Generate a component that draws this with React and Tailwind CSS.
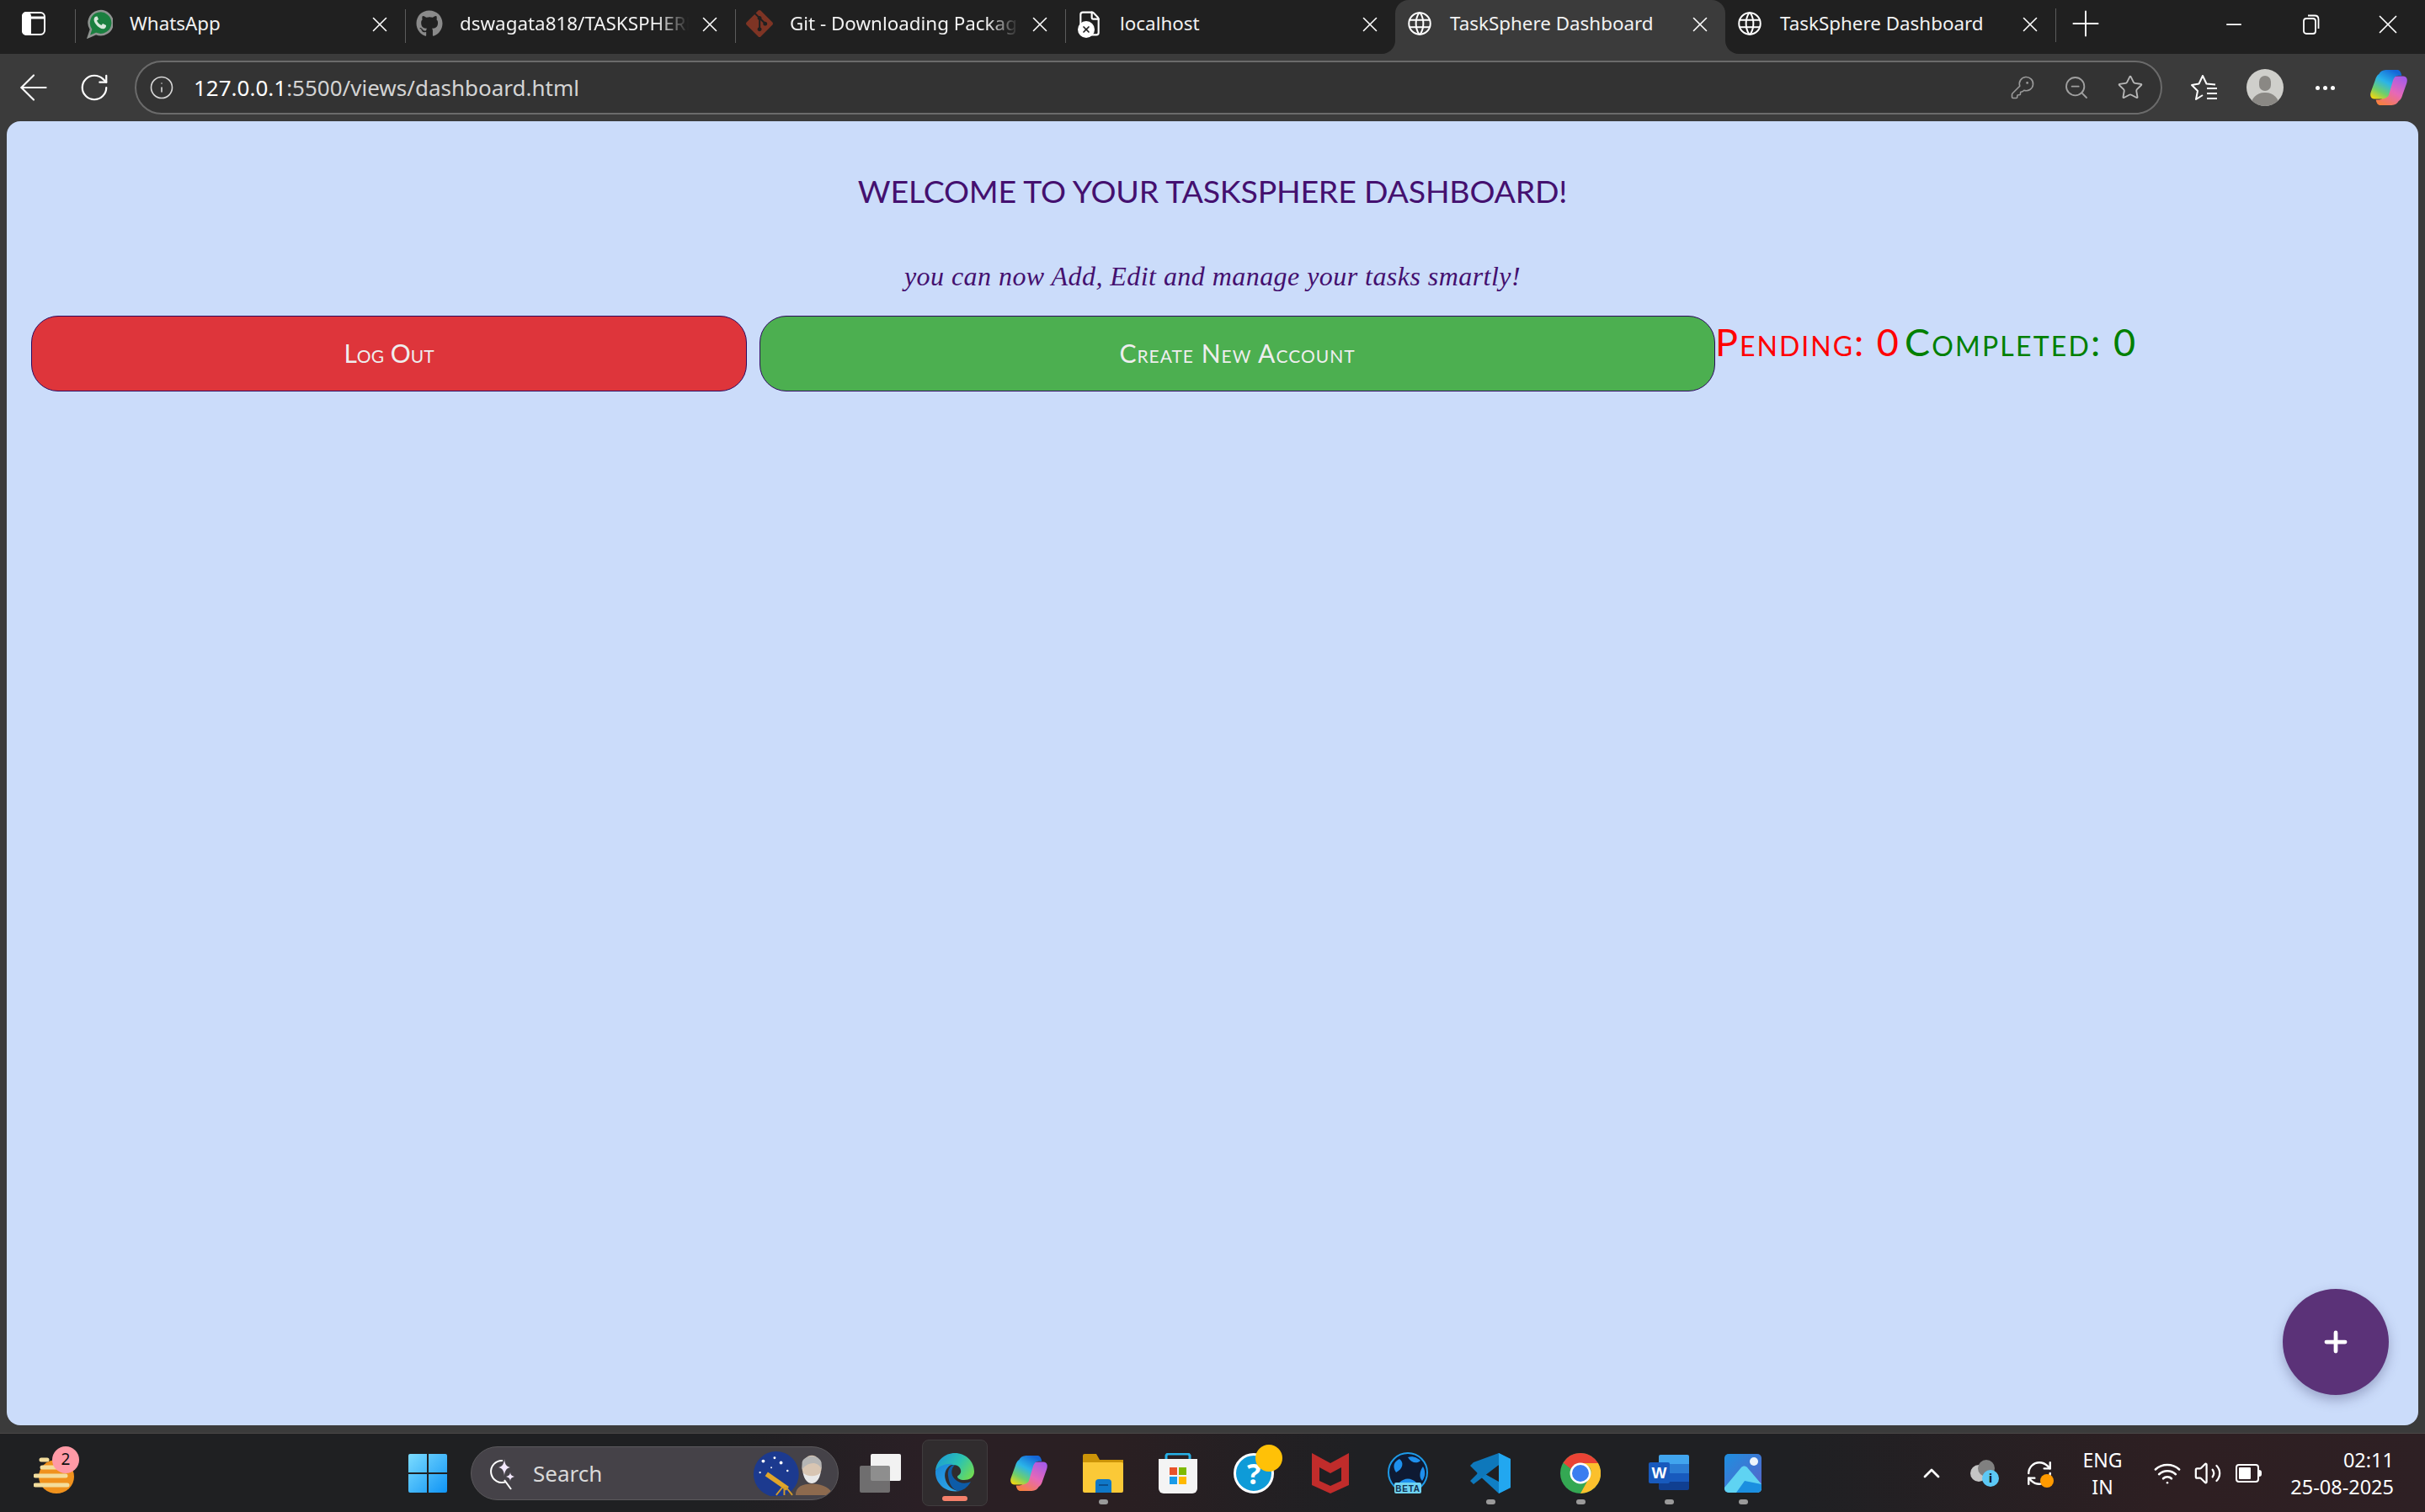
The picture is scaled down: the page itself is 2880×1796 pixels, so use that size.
import React from "react";
import { ArrowLeft, RotateCw, RefreshCw, Info, KeyRound, ZoomOut, Star, X, Plus, Minus, ChevronUp, Volume2, Wifi, File } from "lucide-react";
import { FaGithub } from "react-icons/fa";
import { SiGit } from "react-icons/si";
import { TbWorld } from "react-icons/tb";

function WhatsAppIcon() {
  return (
    <svg width="32" height="36" viewBox="0 0 32 36">
      <path d="M3 34 L6 25 A14 14 0 1 1 12 30 Z" fill="#1a7f3f" stroke="#8f9491" strokeWidth="2.5" />
      <path d="M11 10 C9 12 9 15 12 19 C15 23 19 25 22 24 C24 23 24 21 24 20 L20 18 L18.5 20 C16 19 14 17 13 14.5 L15 13 L13.5 9.5 C12.5 9.3 11.7 9.5 11 10 Z" fill="#d8e8dc" />
    </svg>
  );
}

function LocalhostIcon() {
  return (
    <span className="relative flex h-[34px] w-[28px] items-center justify-center">
      <File size={32} strokeWidth={1.6} color="#ffffff" className="shrink-0" />
      <span className="absolute bottom-0 left-0 flex h-[20px] w-[20px] items-center justify-center rounded-full bg-white">
        <X size={12} strokeWidth={3.4} color="#202020" />
      </span>
    </span>
  );
}

function Tab({ icon, title, active, fade, divider = true }) {
  return (
    <div className={`relative flex h-[64px] w-[392px] shrink-0 items-center ${active ? "rounded-t-2xl bg-[#3b3b3b]" : ""}`}>
      {divider && !active && <span className="absolute left-0 top-[11px] h-[40px] w-px bg-[#5c5c5c]" />}
      {active && (
        <>
          <span className="absolute -left-4 bottom-0 h-4 w-4 bg-[#3b3b3b]"><span className="block h-4 w-4 rounded-br-2xl bg-[#202020]" /></span>
          <span className="absolute -right-4 bottom-0 h-4 w-4 bg-[#3b3b3b]"><span className="block h-4 w-4 rounded-bl-2xl bg-[#202020]" /></span>
        </>
      )}
      <span className="flex w-[58px] shrink-0 -translate-y-[4px] items-center justify-center">{icon}</span>
      <span className={`ml-[7px] w-[272px] whitespace-nowrap -translate-y-[4px] text-[22.4px] leading-[34px] text-[#f2f2f2] ${fade ? "overflow-hidden [mask-image:linear-gradient(to_right,black_86%,transparent_100%)]" : ""}`}>{title}</span>
      <span className="ml-[10px] flex w-[30px] -translate-y-[3px] items-center justify-center">
        <X size={30} strokeWidth={1.3} color="#ffffff" className="shrink-0" />
      </span>
    </div>
  );
}

function TabStrip() {
  return (
    <div className="flex h-[64px] items-center bg-[#202020]">
      <span className="flex w-[89px] shrink-0 -translate-y-[4px] items-center justify-center pr-[9px]">
        <svg width="28" height="28" viewBox="0 0 28 28" fill="none" stroke="#ffffff" strokeWidth="2">
          <rect x="1" y="1" width="26" height="26" rx="5" />
          <path d="M1 7H27" strokeWidth="3" />
          <path d="M10 8V27" />
          <rect x="1" y="1" width="9" height="26" rx="4" fill="#ffffff" />
        </svg>
      </span>
      <Tab icon={<WhatsAppIcon />} title="WhatsApp" />
      <Tab icon={<FaGithub size={32} color="#8a8a8a" />} title="dswagata818/TASKSPHERE" fade />
      <Tab icon={<SiGit size={32} color="#7e3424" />} title="Git - Downloading Package" fade />
      <Tab icon={<LocalhostIcon />} title="localhost" />
      <Tab icon={<TbWorld size={34} strokeWidth={1.4} color="#ffffff" />} title="TaskSphere Dashboard" active />
      <Tab icon={<TbWorld size={34} strokeWidth={1.4} color="#ffffff" />} title="TaskSphere Dashboard" divider={false} />
      <span className="h-[40px] w-px -translate-y-[2px] bg-[#5c5c5c]" />
      <span className="ml-[10px] flex w-[50px] -translate-y-[4px] items-center justify-center">
        <Plus size={50} strokeWidth={0.9} color="#ffffff" className="shrink-0" />
      </span>
      <span className="ml-[121px] flex w-[60px] -translate-y-[3px] items-center justify-center"><Minus size={28} strokeWidth={1.5} color="#ffffff" /></span>
      <span className="ml-[32px] flex w-[60px] -translate-y-[3px] items-center justify-center">
        <svg width="20" height="24" viewBox="0 0 20 24" fill="none" stroke="#ffffff" strokeWidth="1.8">
          <rect x="1" y="5" width="14" height="18" rx="3" />
          <path d="M6 1.500H14C17 1.500 18.500 3.500 18.500 6V17" />
        </svg>
      </span>
      <span className="ml-[31px] flex w-[60px] -translate-y-[3px] items-center justify-center"><X size={38} strokeWidth={1.1} color="#ffffff" /></span>
    </div>
  );
}

function FavoritesIcon() {
  return (
    <svg width="34" height="34" viewBox="0 0 34 34" fill="none" stroke="#ffffff" strokeWidth="2" strokeLinejoin="round">
      <path d="M30 13.500L19.500 12.500L15 3L10.500 12.500L2 14L9 21L7 31L15 26" />
      <path d="M20 18H32M20 24H32M20 30H32" />
    </svg>
  );
}

const copilotDefs = (
  <defs>
    <linearGradient id="cpA" x1="0.7" y1="0" x2="0.1" y2="1">
      <stop offset="0" stopColor="#1466d8" />
      <stop offset="0.4" stopColor="#2bb4e8" />
      <stop offset="0.72" stopColor="#6fcf6a" />
      <stop offset="1" stopColor="#f8d70e" />
    </linearGradient>
    <linearGradient id="cpB" x1="0.8" y1="0" x2="0.2" y2="1">
      <stop offset="0" stopColor="#a65be8" />
      <stop offset="0.5" stopColor="#e668b8" />
      <stop offset="1" stopColor="#f7803f" />
    </linearGradient>
  </defs>
);

function CopilotIcon({ size = 46 }) {
  return (
    <svg width={size} height={size} viewBox="0 0 48 48">
      {copilotDefs}
      <path d="M36 41 C34 45 30 46 26 46 H14 C11 46 9 44 8 39 L12 39 C16 39 18 36 19 32 L24 15 C25 12 29 10 33 10 H42 C46 10 48 14 46 19 L41 33 C40 36 39 39 36 41Z" fill="url(#cpB)" />
      <path d="M12 7 C14 3 18 2 22 2 H34 C37 2 39 4 40 9 L36 9 C32 9 30 12 29 16 L24 33 C23 36 19 38 15 38 H6 C2 38 0 34 2 29 L7 15 C8 12 9 9 12 7Z" fill="url(#cpA)" />
    </svg>
  );
}

function Toolbar() {
  return (
    <div className="flex h-[80px] items-center bg-[#3b3b3b]">
      <span className="flex w-[80px] justify-center"><ArrowLeft size={50} strokeWidth={1} color="#ffffff" /></span>
      <span className="flex w-[64px] justify-center"><RotateCw size={38} strokeWidth={1.4} color="#ffffff" /></span>
      <div className="ml-[16px] flex h-[64px] w-[2408px] items-center rounded-full border-2 border-[#6b6b6b] bg-[#333333]">
        <span className="ml-[16px] flex w-[28px] justify-center"><Info size={30} strokeWidth={1.3} color="#d6d6d6" className="shrink-0" /></span>
        <span className="ml-[24px] text-[26px] leading-[34px] text-[#d4d4d4]"><span className="text-white">127.0.0.1</span>:5500/views/dashboard.html</span>
        <span className="ml-auto flex w-[64px] justify-center"><KeyRound size={30} strokeWidth={1.3} color="#9a9a9a" /></span>
        <span className="flex w-[64px] justify-center"><ZoomOut size={32} strokeWidth={1.4} color="#a0a0a0" /></span>
        <span className="mr-[4px] flex w-[64px] justify-center"><Star size={32} strokeWidth={1.4} color="#b8b8b8" /></span>
      </div>
      <span className="flex w-[100px] justify-center"><FavoritesIcon /></span>
      <span className="relative flex h-[44px] w-[44px] items-end justify-center overflow-hidden rounded-full bg-[#cfcfcb]">
        <span className="absolute top-[8px] h-[18px] w-[14px] rounded-full bg-[#8a8884]" />
        <span className="h-[16px] w-[34px] rounded-t-full bg-[#8a8884]" />
      </span>
      <span className="flex w-[98px] items-center justify-center gap-[4px]">
        <span className="h-[5px] w-[5px] rounded-full bg-white" />
        <span className="h-[5px] w-[5px] rounded-full bg-white" />
        <span className="h-[5px] w-[5px] rounded-full bg-white" />
      </span>
      <span className="flex w-[54px] justify-center"><CopilotIcon size={46} /></span>
    </div>
  );
}

function Main() {
  return (
    <div className="relative mx-[8px] flex h-[1549px] flex-col rounded-[16px] bg-[#cbdcfa]">
      <h1 className="mt-[61px] text-center font-['Lato',sans-serif] text-[37.5px] font-normal leading-[44px] tracking-[-0.2px] text-[#44106f]">WELCOME TO YOUR TASKSPHERE DASHBOARD!</h1>
      <p className="mt-[61px] text-center font-['Liberation_Serif',serif] text-[32px] italic leading-[36px] tracking-[0.45px] text-[#44106f]">you can now Add, Edit and manage your tasks smartly!</p>
      <div className="mt-[29px] flex items-start pl-[29px]">
        <button className="h-[90px] w-[850px] rounded-[32px] border border-[#2d0a5e] bg-[#de353b] pb-[2px] font-['Lato',sans-serif] text-[30px] text-[#eeeeee] [font-variant:small-caps]">Log Out</button>
        <button className="ml-[15px] h-[90px] w-[1135px] rounded-[32px] border border-[#2d0a5e] bg-[#4caf50] pb-[2px] font-['Lato',sans-serif] text-[30px] tracking-[1px] text-[#eeeeee] [font-variant:small-caps]">Create New Account</button>
        <span className="mt-[3px] font-['Lato',sans-serif] text-[45px] leading-[56px] tracking-[2px] text-[#ff0000] [font-variant:small-caps]">Pending: 0</span>
        <span className="ml-[5px] mt-[3px] font-['Lato',sans-serif] text-[45px] leading-[56px] tracking-[2.2px] text-[#008000] [font-variant:small-caps]">Completed: 0</span>
      </div>
      <button className="absolute bottom-[36px] right-[35px] flex h-[126px] w-[126px] items-center justify-center rounded-full bg-[#5b3278] shadow-[0_6px_14px_rgba(60,60,110,0.35)]">
        <Plus size={38} strokeWidth={3} color="#ffffff" />
      </button>
    </div>
  );
}

function WidgetIcon() {
  return (
    <span className="relative flex h-[56px] w-[54px] shrink-0 -translate-y-[4px] items-end">
      <svg width="50" height="46" viewBox="0 0 50 46">
        <ellipse cx="27" cy="26" rx="21" ry="20" fill="#f0921d" />
        <path d="M9 6H16M10 15H46M2 25H38M2 36H40" stroke="#f3dd9c" strokeWidth="5" strokeLinecap="round" />
      </svg>
      <span className="absolute right-0 top-0 flex h-[32px] w-[32px] items-center justify-center rounded-full bg-[#ff9aa6] text-[19px] leading-none text-[#111111]">2</span>
    </span>
  );
}

function WindowsLogo() {
  return (
    <svg width="46" height="46" viewBox="0 0 46 46">
      <defs>
        <linearGradient id="winG" x1="0" y1="0" x2="1" y2="1">
          <stop offset="0" stopColor="#7cdcff" />
          <stop offset="1" stopColor="#0f94f5" />
        </linearGradient>
      </defs>
      <path d="M2 0H22V22H0V2A2 2 0 0 1 2 0ZM24 0H44A2 2 0 0 1 46 2V22H24ZM0 24H22V46H2A2 2 0 0 1 0 44ZM24 24H46V44A2 2 0 0 1 44 46H24Z" fill="url(#winG)" />
    </svg>
  );
}

function SearchPicture() {
  return (
    <svg width="98" height="54" viewBox="0 0 102 54">
      <circle cx="30" cy="28" r="28" fill="#1c3a8f" />
      <g fill="#ffffff">
        <circle cx="14" cy="12" r="2" /><circle cx="28" cy="8" r="1.500" /><circle cx="36" cy="14" r="2" /><circle cx="44" cy="24" r="1.300" /><circle cx="10" cy="26" r="1.200" /><circle cx="24" cy="20" r="1" />
      </g>
      <path d="M18 28L44 46" stroke="#e0a52a" strokeWidth="6" />
      <path d="M38 44L30 54M40 44L40 54M42 44L50 54" stroke="#d19a2a" strokeWidth="2" />
      <path d="M54 54 C54 44 62 40 74 40 C88 40 98 46 100 54Z" fill="#8d6a4e" />
      <ellipse cx="74" cy="20" rx="12" ry="15" fill="#d8c5b2" />
      <path d="M62 14 C63 4 84 3 86 14 L86 22 C82 12 70 12 62 22Z" fill="#b5b5b5" />
      <path d="M63 26 C66 44 82 44 85 26 C80 32 68 32 63 26Z" fill="#e8e8e8" />
    </svg>
  );
}

function TaskViewIcon() {
  return (
    <span className="relative block h-[46px] w-[49px]">
      <span className="absolute right-0 top-0 h-[32px] w-[36px] rounded-[2px] bg-[#f2f2f2]" />
      <span className="absolute bottom-0 left-0 h-[32px] w-[36px] rounded-[2px] bg-[#7c7c7c]/85" />
    </span>
  );
}

function EdgeIcon() {
  return (
    <svg width="48" height="48" viewBox="0 0 48 48">
      <defs>
        <linearGradient id="edA" x1="0" y1="0.2" x2="1" y2="0.7">
          <stop offset="0" stopColor="#1c9ad6" />
          <stop offset="0.55" stopColor="#2cc3b0" />
          <stop offset="1" stopColor="#6fdb55" />
        </linearGradient>
        <linearGradient id="edB" x1="0" y1="0" x2="0.8" y2="1">
          <stop offset="0" stopColor="#1a86d8" />
          <stop offset="1" stopColor="#2fa7e6" />
        </linearGradient>
      </defs>
      <path d="M1 22 C2 10 12 1 24 1 C37 1 47 11 47 23 C47 30 41 33 35 33 C30 33 27 31 27 29 C27 28 30 27 31 24 C32 20 29 15 22 15 C12 15 3 19 1 22Z" fill="url(#edA)" />
      <path d="M1 22 C5 16 14 13 22 14 C15 16 10 24 13 33 C15 40 22 46 30 46 C14 49 0 38 1 22Z" fill="url(#edB)" />
      <path d="M16 28 C15 21 19 15 24 15 C19 20 19 27 24 32 C29 37 36 38 43 35 C39 42 33 46 28 46 C21 45 17 37 16 28Z" fill="#0d5ca8" />
    </svg>
  );
}

function FolderIcon() {
  return (
    <svg width="48" height="46" viewBox="0 0 48 46">
      <path d="M0 2A2 2 0 0 1 2 0H16L20 7H48V12H0Z" fill="#cc9408" />
      <path d="M0 10H46A2 2 0 0 1 48 12V44A2 2 0 0 1 46 46H2A2 2 0 0 1 0 44Z" fill="#fbc937" />
      <path d="M15 46V34A4 4 0 0 1 19 30H30A4 4 0 0 1 34 34V46Z" fill="#0f78c8" />
      <path d="M19 37H30" stroke="#0b4f8e" strokeWidth="2" />
    </svg>
  );
}

function StoreIcon() {
  return (
    <svg width="46" height="48" viewBox="0 0 46 48">
      <path d="M9 9V3A3 3 0 0 1 12 1H34A3 3 0 0 1 37 3V9" fill="none" stroke="#27b0e6" strokeWidth="3" />
      <path d="M0 7H46V42A6 6 0 0 1 40 48H6A6 6 0 0 1 0 42Z" fill="#f4f4f4" />
      <rect x="13" y="17" width="9" height="9" fill="#e8532a" />
      <rect x="24" y="17" width="9" height="9" fill="#7fba00" />
      <rect x="13" y="28" width="9" height="9" fill="#1a9be8" />
      <rect x="24" y="28" width="9" height="9" fill="#ffb900" />
    </svg>
  );
}

function HelpIcon() {
  return (
    <span className="relative block h-[48px] w-[48px]">
      <span className="flex h-[48px] w-[48px] items-center justify-center rounded-full border-[3px] border-white bg-[#0e9bd8] text-[34px] font-bold leading-none text-white">?</span>
      <span className="absolute -right-[10px] -top-[10px] h-[32px] w-[32px] rounded-full bg-[#ffc107]" />
    </span>
  );
}

function McAfeeIcon() {
  return (
    <svg width="44" height="48" viewBox="0 0 44 48">
      <path d="M0 0L22 12L44 0V38L22 48L0 38Z" fill="#c02c2b" />
      <path d="M9 17L22 24L35 17V33L22 39L9 33Z" fill="#1f1f22" />
    </svg>
  );
}

function BetaIcon() {
  return (
    <svg width="48" height="50" viewBox="0 0 48 50">
      <circle cx="24" cy="24" r="23" fill="#0e1a33" stroke="#1e9be8" strokeWidth="2" />
      <path d="M14 8 C20 12 18 20 10 24 C5 16 8 11 14 8ZM24 6 C30 4 36 7 39 10 C35 14 28 13 24 6ZM42 17 C46 24 44 30 41 34 C37 30 38 22 42 17ZM14 36 C20 30 28 30 34 36Z" fill="#1e90ee" />
      <rect x="8" y="36" width="32" height="13" rx="2" fill="#6fd3f2" />
      <text x="24" y="46.500" textAnchor="middle" fontSize="10" fontWeight="700" fontFamily="'Liberation Sans',sans-serif" fill="#11304e" letterSpacing="0.7">BETA</text>
    </svg>
  );
}

function VSCodeIcon() {
  return (
    <svg width="48" height="48" viewBox="0 0 48 48">
      <path d="M34 0L48 7V41L34 48L8 24Z" fill="#0f7fc4" />
      <path d="M34 0L48 7V41L34 48Z" fill="#22a7f0" />
      <path d="M34 14L34 34L16 24Z" fill="#1f1f22" />
      <path d="M4 11L0 15L9 24L0 33L4 37L34 14V0Z" fill="#0e78bb" />
    </svg>
  );
}

function ChromeIcon() {
  return (
    <svg width="48" height="48" viewBox="0 0 48 48">
      <circle cx="24" cy="24" r="24" fill="#34a853" />
      <path d="M24 0A24 24 0 0 1 45 12H24A12 12 0 0 0 13 19L3.500 11.500A24 24 0 0 1 24 0Z" fill="#ea4335" />
      <path d="M45 12A24 24 0 0 1 24 48L34 30A12 12 0 0 0 35 17L24 12Z" fill="#fbc02d" />
      <circle cx="24" cy="24" r="12.500" fill="#ffffff" />
      <circle cx="24" cy="24" r="10" fill="#3a7df0" />
    </svg>
  );
}

function WordIcon() {
  return (
    <span className="relative block h-[44px] w-[48px]">
      <span className="absolute right-0 top-0 flex h-[42px] w-[36px] flex-col overflow-hidden rounded-[2px]">
        <span className="h-[11px] bg-[#41a5ee]" />
        <span className="h-[11px] bg-[#2b7cd3]" />
        <span className="h-[10px] bg-[#185abd]" />
        <span className="h-[10px] bg-[#103f91]" />
      </span>
      <span className="absolute left-0 top-[9px] flex h-[25px] w-[25px] items-center justify-center rounded-[2px] bg-[#185abd] font-['Liberation_Sans',sans-serif] text-[19px] font-bold leading-none text-white">W</span>
    </span>
  );
}

function PhotosIcon() {
  return (
    <svg width="44" height="46" viewBox="0 0 44 46">
      <defs>
        <linearGradient id="phA" x1="0" y1="0" x2="1" y2="1">
          <stop offset="0" stopColor="#1e8fe0" />
          <stop offset="1" stopColor="#5a62c8" />
        </linearGradient>
      </defs>
      <rect width="44" height="46" rx="5" fill="url(#phA)" />
      <circle cx="35" cy="9" r="5" fill="#eef4fb" />
      <path d="M0 40L20 16C22 14 25 14 27 16L44 36V41A5 5 0 0 1 39 46H5A5 5 0 0 1 0 41Z" fill="#5fd3f2" />
      <path d="M24 32L44 36V41A5 5 0 0 1 39 46H14Z" fill="#1b8fe0" />
    </svg>
  );
}

function Slot({ width, dot, children }) {
  return (
    <span className={`relative flex h-[93px] shrink-0 items-center justify-center ${width}`}>
      {children}
      {dot && <span className="absolute bottom-[9px] h-[6px] w-[11px] rounded-full bg-[#9a9a9a]" />}
    </span>
  );
}

function Taskbar() {
  return (
    <div className="flex h-[94px] items-center border-t border-[#4a4746] bg-[linear-gradient(90deg,#1f2022_0%,#1f2022_30%,#2a1f25_38%,#2a1f22_46%,#1f2023_56%,#1f2023_74%,#2e1f22_90%,#2e2024_100%)] pl-[40px] text-white">
      <WidgetIcon />
      <span className="ml-[391px]"><WindowsLogo /></span>
      <div className="ml-[28px] flex h-[64px] w-[437px] shrink-0 items-center overflow-hidden rounded-full border border-[#5b595c] bg-[#454248]">
        <span className="ml-[20px] flex w-[32px] justify-center">
          <svg width="34" height="40" viewBox="0 0 34 40" fill="none" stroke="#ffffff" strokeWidth="2" className="shrink-0">
            <path d="M22 30A13 13 0 1 1 18 5" />
            <path d="M20 28L28 39" />
            <path d="M20 2C20 8 22 12 27 13C22 14 20 18 20 24C20 18 18 14 13 13C18 12 20 8 20 2Z" fill="#f3e8ff" stroke="none" />
            <path d="M27 18C27 21 28 23 32 24C28 25 27 27 27 30C27 27 26 25 22 24C26 23 27 21 27 18Z" fill="#f3e8ff" stroke="none" />
          </svg>
        </span>
        <span className="ml-[21px] text-[26px] leading-[34px] text-[#d9d9d9]">Search</span>
        <span className="ml-auto mr-[4px]"><SearchPicture /></span>
      </div>
      <span className="ml-[25px]"><TaskViewIcon /></span>
      <span className="relative ml-[25px] flex h-[79px] w-[78px] shrink-0 items-start justify-center rounded-[8px] border border-[#403c3e] bg-[#302c2e] pt-[14px]">
        <EdgeIcon />
        <span className="absolute bottom-[5px] h-[6px] w-[30px] rounded-full bg-[#f4806a]" />
      </span>
      <span className="ml-[5px] flex"><Slot width="w-[88px]"><CopilotIcon /></Slot></span>
      <Slot width="w-[88px]" dot><FolderIcon /></Slot>
      <Slot width="w-[90px]"><StoreIcon /></Slot>
      <Slot width="w-[90px]"><HelpIcon /></Slot>
      <Slot width="w-[92px]"><McAfeeIcon /></Slot>
      <Slot width="w-[92px]"><BetaIcon /></Slot>
      <Slot width="w-[104px]" dot><VSCodeIcon /></Slot>
      <Slot width="w-[110px]" dot><ChromeIcon /></Slot>
      <Slot width="w-[100px]" dot><WordIcon /></Slot>
      <Slot width="w-[76px]" dot><PhotosIcon /></Slot>
      <span className="ml-[162px] flex"><Slot width="w-[48px]"><ChevronUp size={32} strokeWidth={2} color="#ffffff" /></Slot></span>
      <Slot width="w-[78px]">
        <span className="relative block h-[32px] w-[34px]">
          <span className="absolute left-0 top-[6px] h-[20px] w-[20px] rounded-full bg-[#c5c5c5]" />
          <span className="absolute left-[9px] top-0 h-[20px] w-[20px] rounded-full bg-[#808080]" />
          <span className="absolute bottom-0 right-0 flex h-[20px] w-[20px] items-center justify-center rounded-full bg-[#5cc8f5] text-[15px] font-bold leading-none text-[#10212c]">i</span>
        </span>
      </Slot>
      <Slot width="w-[52px]">
        <span className="relative block h-[34px] w-[34px]">
          <RefreshCw size={34} strokeWidth={1.7} color="#ffffff" />
          <span className="absolute bottom-0 right-0 h-[16px] w-[16px] rounded-full bg-[#ff9a00]" />
        </span>
      </Slot>
      <Slot width="w-[98px]">
        <span className="text-center text-[23px] leading-[32px]">ENG<br />IN</span>
      </Slot>
      <Slot width="w-[56px]"><Wifi size={34} strokeWidth={1.8} color="#ffffff" /></Slot>
      <Slot width="w-[40px]"><Volume2 size={34} strokeWidth={1.6} color="#ffffff" className="shrink-0" /></Slot>
      <Slot width="w-[56px]">
        <span className="flex items-center">
          <span className="flex h-[22px] w-[28px] items-center rounded-[4px] border-2 border-white p-[2px]"><span className="h-full w-[14px] rounded-[1px] bg-white" /></span>
          <span className="h-[8px] w-[3px] rounded-r-sm bg-white" />
        </span>
      </Slot>
      <span className="flex-1 pr-[37px] text-right text-[23.5px] leading-[32px]">02:11<br />25-08-2025</span>
    </div>
  );
}

export default function App() {
  return (
    <div className="flex h-[1796px] w-[2880px] flex-col overflow-hidden bg-[#3b3b3b] font-['Noto_Sans',sans-serif]">
      <TabStrip />
      <Toolbar />
      <Main />
      <div className="h-[9px] shrink-0" />
      <Taskbar />
    </div>
  );
}
